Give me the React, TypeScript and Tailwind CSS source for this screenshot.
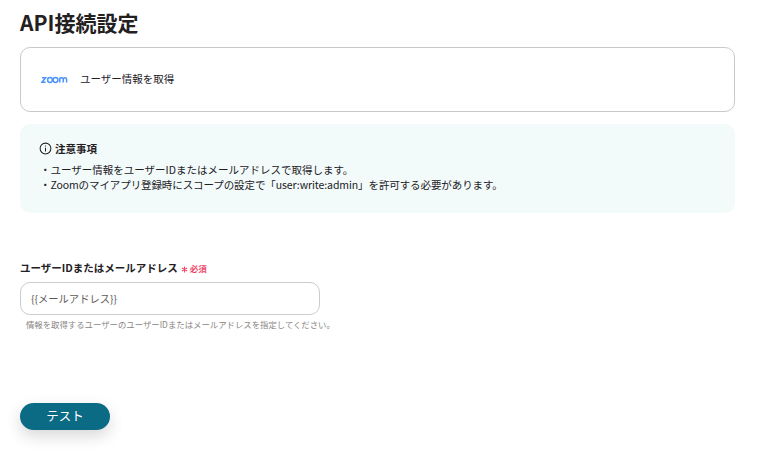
export default function App() {
  return (
    <div className="w-[768px] h-[472px] overflow-hidden bg-white pl-5 pr-[33px] pt-[8px] text-[#23201f] font-['Noto_Sans_CJK_JP','Noto_Sans',sans-serif]">
      <h1 className="text-[21px] leading-[29px] font-bold">API接続設定</h1>
      <div className="mt-[10px] h-[65px] rounded-[10px] border border-[#c9c9c9] flex items-center pl-5">
        <svg viewBox="0 0 28 8" className="w-[28px] h-[8px]" fill="none" stroke="#4d94ff" strokeWidth="1.5">
          <circle cx="9" cy="4" r="2.4" />
          <circle cx="14.5" cy="4" r="2.4" />
          <path d="M1 1.8h3.6L1 6.2h3.6" />
          <path d="M18.8 6.6V1.6M18.8 3.4c0-2.2 3.4-2.2 3.4 0v3.2M22.2 3.4c0-2.2 3.4-2.2 3.4 0v3.2" />
        </svg>
        <span className="ml-[11px] text-[10.5px] -translate-y-px">ユーザー情報を取得</span>
      </div>
      <div className="mt-3 h-[89px] rounded-[10px] bg-[#f2fbfa] pl-5 pt-[17px] text-[10.5px] leading-[15px]">
        <div className="flex items-center gap-[3px] font-bold -ml-px">
          <svg viewBox="0 0 14 14" className="w-[13px] h-[13px]" fill="none" stroke="#23201f" strokeWidth="1.1">
            <circle cx="7" cy="7" r="5.8" />
            <path d="M7 6.2v4M7 3.8v1.1" />
          </svg>
          注意事項
        </div>
        <p className="mt-[6px]">・ユーザー情報をユーザーIDまたはメールアドレスで取得します。</p>
        <p className="tracking-[-0.09px]">・Zoomのマイアプリ登録時にスコープの設定で「user:write:admin」を許可する必要があります。</p>
      </div>
      <div className="mt-[48px] flex items-center text-[10.5px] leading-[14px] font-bold">
        ユーザーIDまたはメールアドレス
        <svg viewBox="0 0 8 8" className="ml-[3px] mt-[3px] w-[7px] h-[7px]" stroke="#f0476a" strokeWidth="1.2">
          <path d="M4 .6v6.8M1 2.2l6 3.6M7 2.2L1 5.8" />
        </svg>
        <span className="ml-[2px] text-[8.5px] text-[#f0476a]">必須</span>
      </div>
      <div className="mt-[7px] w-[300px] h-[33px] rounded-[10px] border border-[#c9ccd1] flex items-center pl-[10px] text-[10.3px] text-[#5d5a58]">
        {"{{メールアドレス}}"}
      </div>
      <p className="mt-[4px] ml-[6px] text-[8.4px] leading-[10px] text-[#8a8683] whitespace-nowrap">情報を取得するユーザーのユーザーIDまたはメールアドレスを指定してください。</p>
      <button className="mt-[74px] w-[90px] h-[27px] rounded-full bg-[#0b6b85] text-white text-[12.5px] shadow-[0_6px_16px_rgba(0,0,0,0.16)]">テスト</button>
    </div>
  );
}
